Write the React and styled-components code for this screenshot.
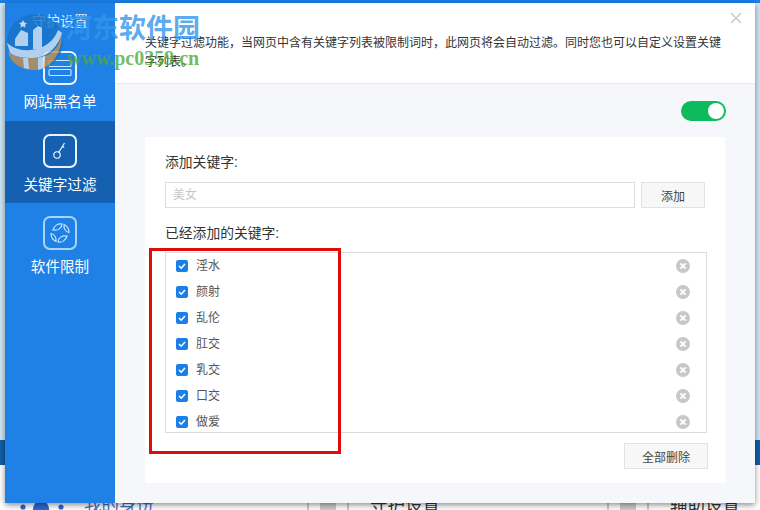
import React from "react";
import styled, { createGlobalStyle } from "styled-components";

const Global = createGlobalStyle`
  html, body { margin: 0; padding: 0; background: #fff; overflow: hidden; }
  * { box-sizing: border-box; }
  body { font-family: "Liberation Sans", "Noto Sans CJK SC", sans-serif; }
`;

const Stage = styled.div`
  position: relative;
  width: 760px;
  height: 510px;
  overflow: hidden;
  background: linear-gradient(to bottom, #1a7fe8 0, #1a7fe8 3px, #cfe6f5 3px, #cfe6f5 440px, #0f5ea8 440px, #0f5ea8 465px, #fff 465px);
`;

const BehindItem = styled.span`
  position: absolute;
  top: 494px;
  left: ${(p) => p.$x}px;
  color: ${(p) => p.$c || "#333"};
  font-size: 17.5px;
  line-height: 22px;
  white-space: nowrap;
`;

const BehindIcon = styled.span`
  position: absolute;
  top: 498px;
  left: ${(p) => p.$x}px;
  width: 42px;
  height: 14px;
  border-left: 2px solid #ccc;
  border-right: 2px solid #ccc;
  display: flex;
  justify-content: center;
  &::after {
    content: "";
    width: 16px;
    height: 14px;
    background: #ccc;
  }
`;

const People = styled.svg`
  position: absolute;
  left: 20px;
  top: 500px;
`;

const Dialog = styled.div`
  position: absolute;
  left: 5px;
  top: 3px;
  width: 750px;
  height: 500px;
  display: flex;
  background: #f5f7fb;
  box-shadow: 0 2px 6px rgba(0, 0, 0, 0.45);
`;

const Sidebar = styled.nav`
  width: 110px;
  flex: none;
  background: #1f80e6;
  display: flex;
  flex-direction: column;
  color: #fff;
`;

const SideTitle = styled.div`
  height: 36px;
  padding: 9px 0 0 27px;
  font-size: 14px;
  line-height: 18px;
  color: #dbeafe;
`;

const NavItem = styled.div`
  height: 82px;
  display: flex;
  flex-direction: column;
  align-items: center;
  background: ${(p) => (p.$active ? "#1560b0" : "transparent")};
  padding-top: ${(p) => p.$pt ?? 12}px;
`;

const NavIconBox = styled.div`
  width: 34px;
  height: 34px;
  border-radius: 7px;
  border: 2px solid ${(p) => (p.$dim ? "#a8d4f8" : "#e8f3fd")};
  display: flex;
  align-items: center;
  justify-content: center;
  flex: none;
`;

const NavLabel = styled.div`
  margin-top: 7px;
  font-size: 14.6px;
  line-height: 20px;
  color: #fff;
`;

const Main = styled.main`
  flex: 1;
  display: flex;
  flex-direction: column;
  position: relative;
  min-width: 0;
`;

const Header = styled.header`
  height: 81px;
  flex: none;
  background: #fff;
  border-bottom: 1px solid #e8e8e8;
  padding: 31px 30px 0 30px;
  font-size: 12px;
  line-height: 19px;
  color: #333;
`;

const Close = styled.button`
  position: absolute;
  top: 8px;
  right: 12px;
  width: 14px;
  height: 14px;
  padding: 0;
  border: 0;
  background: none;
  display: flex;
`;

const Body = styled.div`
  flex: 1;
  padding: 17px 30px 20px 30px;
  display: flex;
  flex-direction: column;
`;

const ToggleRow = styled.div`
  display: flex;
  justify-content: flex-end;
  height: 36px;
  margin-right: -1px;
`;

const Toggle = styled.div`
  width: 45px;
  height: 20px;
  border-radius: 10px;
  background: #0dbb5c;
  display: flex;
  justify-content: flex-end;
  align-items: center;
  padding-right: 2px;
  &::after {
    content: "";
    width: 16px;
    height: 16px;
    border-radius: 50%;
    background: #fff;
  }
`;

const Card = styled.section`
  flex: 1;
  background: #fff;
  padding: 17px 20px 0 20px;
  display: flex;
  flex-direction: column;
`;

const Label = styled.div`
  font-size: 13.8px;
  line-height: 18px;
  color: #333;
`;

const KeywordHeading = styled(Label)`
  margin-top: 17px;
`;

const AddRow = styled.div`
  display: flex;
  gap: 6px;
  margin-top: 10px;
  height: 26px;
`;

const Input = styled.input`
  flex: 1;
  width: 470px;
  height: 26px;
  border: 1px solid #ddd;
  padding: 0 7px;
  font: 12px "Liberation Sans", "Noto Sans CJK SC", sans-serif;
  outline: none;
  &::placeholder { color: #c8c8c8; }
`;

const Btn = styled.button`
  width: ${(p) => p.$w}px;
  height: 26px;
  border: 1px solid #e2e2e2;
  background: #f7f7f7;
  color: #444;
  font: 12px "Liberation Sans", "Noto Sans CJK SC", sans-serif;
  padding: 0;
`;

const List = styled.div`
  margin-top: 9px;
  width: 542px;
  height: 181px;
  border: 1px solid #dcdcdc;
`;

const Row = styled.div`
  height: 26px;
  display: flex;
  align-items: center;
  padding: 0 16px 0 10px;
  font-size: 12px;
  line-height: 14px;
  color: #555;
`;

const Check = styled.span`
  width: 12px;
  height: 12px;
  border-radius: 2px;
  background: #1b7fe8;
  display: flex;
  align-items: center;
  justify-content: center;
  margin-right: 8px;
  flex: none;
`;

const RowText = styled.span`
  flex: 1;
`;

const Footer = styled.div`
  display: flex;
  justify-content: flex-end;
  margin: 10px -3px 0 0;
`;

const RedBox = styled.div`
  position: absolute;
  left: 149px;
  top: 248px;
  width: 192px;
  height: 206px;
  border: 3px solid #e00c0c;
  pointer-events: none;
`;

const Watermark = styled.div`
  position: absolute;
  left: 5px;
  top: 12px;
  width: 210px;
  height: 62px;
  pointer-events: none;
`;

const WmTitle = styled.div`
  position: absolute;
  left: 60px;
  top: -1px;
  font-size: 27px;
  line-height: 36px;
  font-weight: 700;
  color: rgba(50, 150, 235, 0.8);
  white-space: nowrap;
`;

const WmUrl = styled.div`
  position: absolute;
  left: 62px;
  top: 34px;
  font: 700 20px/24px "Liberation Serif", serif;
  color: rgba(75, 170, 60, 0.8);
  white-space: nowrap;
`;

const WmLogo = styled.svg`
  position: absolute;
  left: 0;
  top: 0;
  opacity: 0.8;
`;

const items = ["淫水", "颜射", "乱伦", "肛交", "乳交", "口交", "做爱"];

const RemoveIcon = () => (
  <svg width="14" height="14" viewBox="0 0 14 14">
    <circle cx="7" cy="7" r="7" fill="#c8c8c8" />
    <path d="M4.4 4.4l5.2 5.2M9.6 4.4l-5.2 5.2" stroke="#fff" strokeWidth="1.8" />
  </svg>
);

export default function App() {
  return (
    <Stage>
      <Global />
      <People width="44" height="10" viewBox="0 0 44 10" fill="#2f66d0">
        <circle cx="21" cy="9" r="8" />
        <circle cx="3" cy="7" r="2.6" />
        <circle cx="41" cy="7" r="2.6" />
      </People>
      <BehindIcon $x={307} />
      <BehindIcon $x={607} />
      <BehindItem $x={84} $c="#3b6fc8">我的身份</BehindItem>
      <BehindItem $x={370}>守护设置</BehindItem>
      <BehindItem $x={670}>辅助设置</BehindItem>
      <Dialog>
        <Sidebar>
          <SideTitle>守护设置</SideTitle>
          <NavItem $pt={12}>
            <NavIconBox>
              <svg width="24" height="18" viewBox="0 0 24 18" fill="none" stroke="#cfe6fb" strokeWidth="1.1">
                <rect x="1" y="1.5" width="22" height="6" rx="1" />
                <rect x="1" y="10.5" width="22" height="6" rx="1" />
              </svg>
            </NavIconBox>
            <NavLabel>网站黑名单</NavLabel>
          </NavItem>
          <NavItem $active $pt={13}>
            <NavIconBox>
              <svg width="20" height="20" viewBox="0 0 20 20" fill="none" stroke="#fff" strokeWidth="1.1">
                <circle cx="7" cy="14" r="3.2" />
                <path d="M8.8 11.3L14.5 2M12.6 5.5l1.6 1" />
              </svg>
            </NavIconBox>
            <NavLabel>关键字过滤</NavLabel>
          </NavItem>
          <NavItem $pt={13}>
            <NavIconBox $dim>
              <svg width="24" height="24" viewBox="0 0 24 24" fill="none" stroke="#c4e2fb" strokeWidth="1.2">
                <path d="M5 9c1-4 5-7 9-6 0 4-4 7-9 6z" />
                <path d="M19 15c-1 4-5 7-9 6 0-4 4-7 9-6z" />
                <path d="M16 3.5c3 1.500 5 4.500 5 8-3.500-.5-5.500-4-5-8z" />
                <path d="M8 20.500c-3-1.500-5-4.500-5-8 3.500.5 5.500 4 5 8z" />
              </svg>
            </NavIconBox>
            <NavLabel>软件限制</NavLabel>
          </NavItem>
        </Sidebar>
        <Main>
          <Header>
            关键字过滤功能，当网页中含有关键字列表被限制词时，此网页将会自动过滤。同时您也可以自定义设置关键字列表。
          </Header>
          <Close aria-label="关闭">
            <svg width="14" height="14" viewBox="0 0 14 14">
              <path d="M2 2l10 10M12 2L2 12" stroke="#ccc" strokeWidth="1.6" />
            </svg>
          </Close>
          <Body>
            <ToggleRow>
              <Toggle />
            </ToggleRow>
            <Card>
              <Label>添加关键字:</Label>
              <AddRow>
                <Input placeholder="美女" />
                <Btn $w={64}>添加</Btn>
              </AddRow>
              <KeywordHeading>已经添加的关键字:</KeywordHeading>
              <List>
                {items.map((t) => (
                  <Row key={t}>
                    <Check>
                      <svg width="10" height="10" viewBox="0 0 10 10">
                        <path d="M2 5l2.2 2.2L8 3" stroke="#fff" strokeWidth="1.6" fill="none" />
                      </svg>
                    </Check>
                    <RowText>{t}</RowText>
                    <RemoveIcon />
                  </Row>
                ))}
              </List>
              <Footer>
                <Btn $w={84}>全部删除</Btn>
              </Footer>
            </Card>
          </Body>
        </Main>
      </Dialog>
      <RedBox />
      <Watermark>
        <WmLogo width="62" height="62" viewBox="0 0 62 62">
          <circle cx="30" cy="30" r="28" fill="#1a74c8" />
          <path d="M3 40C5 50 16 59 30 58c14 0 27-14 27-37-2 12-10 25-27 25-11 0-21-1-27-6z" fill="#c4914c" />
          <path d="M18 46h5l1 11-5-1zM33 46l7-2-1 12-6 2z" fill="#d8e4f0" />
          <path d="M2 31c6 5 14 8 23 7 14-1 24-9 28-20 2 1 3 2 4 3-3 12-14 25-29 25-9 0-18-1-23-5z" fill="#d6e4f3" />
          <path d="M10 34V27l6-9 7 3v13zM28 37V18l5-4 4 2v21z" fill="#d6e4f3" />
          <path d="M18 8l1.2 2.6 2.8.3-2 2 .5 2.800-2.500-1.400-2.500 1.400.5-2.800-2-2 2.800-.3z" fill="#e8f1fa" />
        </WmLogo>
        <WmTitle>河东软件园</WmTitle>
        <WmUrl>www.pc0359.cn</WmUrl>
      </Watermark>
    </Stage>
  );
}
